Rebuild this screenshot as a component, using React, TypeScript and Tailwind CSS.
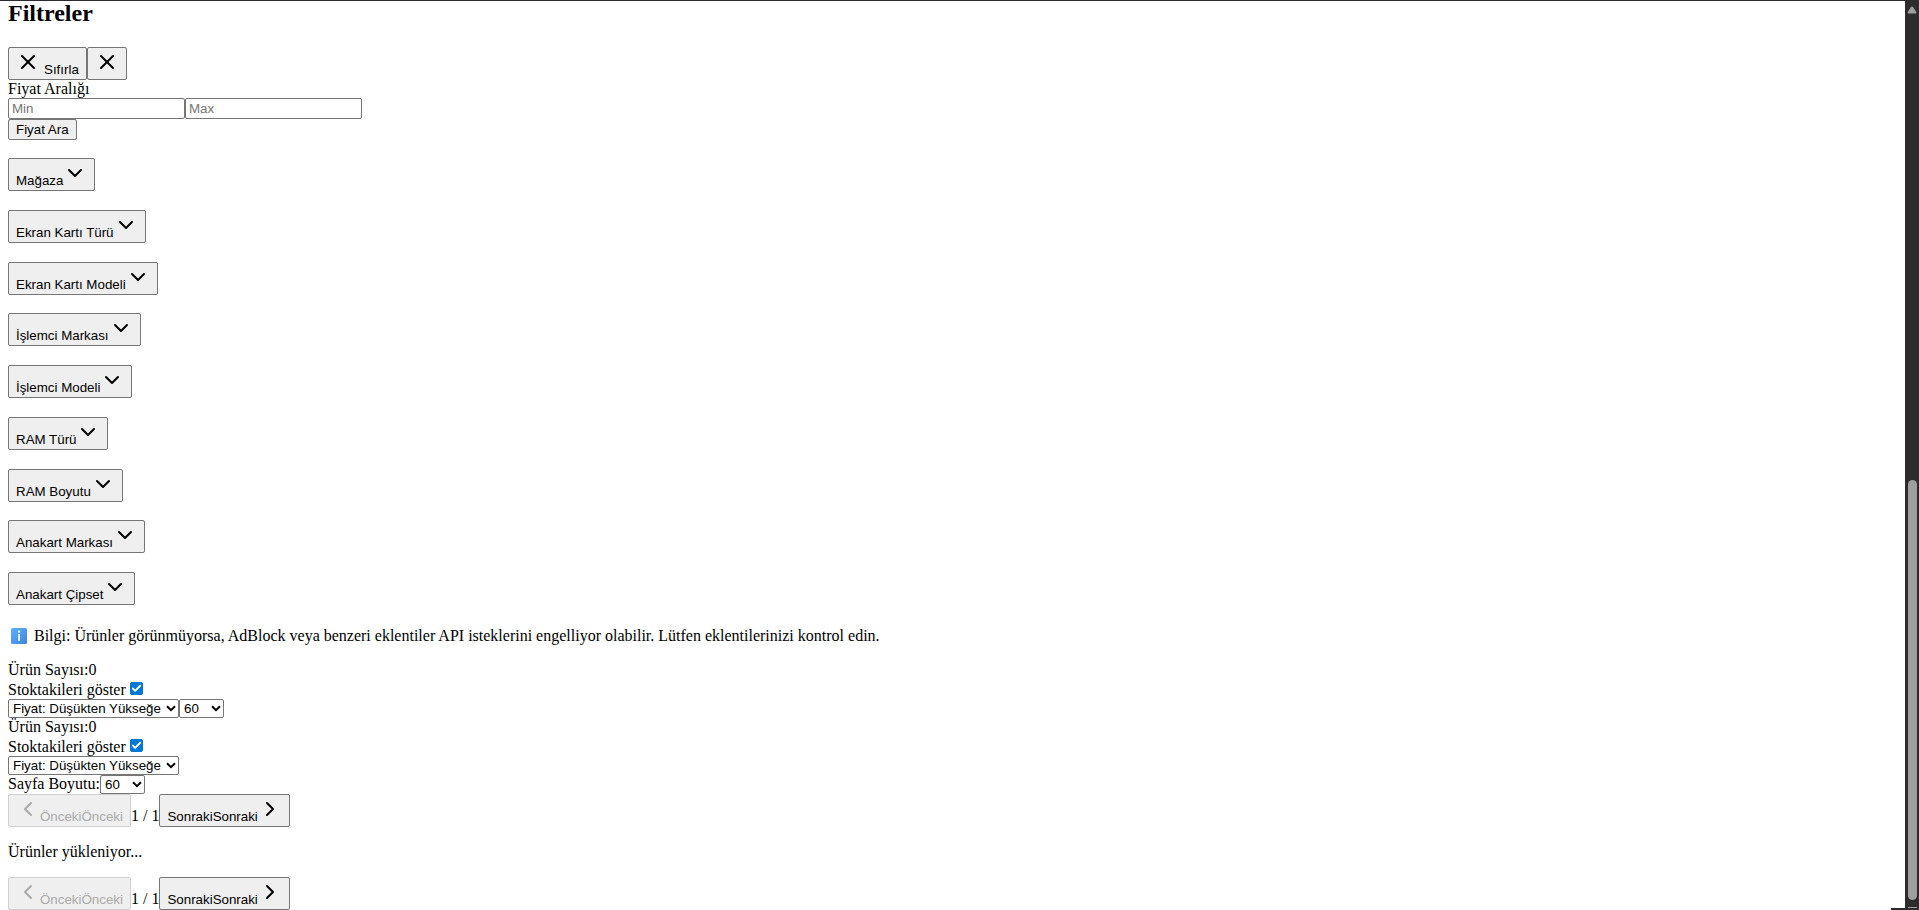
import React from "react";
import { Check, ChevronDown, ChevronLeft, ChevronRight, X } from "lucide-react";

const control =
  "[font-size:smaller] font-['Liberation_Sans',Arial,sans-serif] rounded-[2px] border border-[#767676]";
const iconButton =
  "inline-flex h-[33px] items-baseline bg-[#efefef] px-[7px] pt-[2px] leading-4 disabled:border-[#d0d0d0] disabled:text-[#aaaaaa]";

const filters = [
  "Mağaza",
  "Ekran Kartı Türü",
  "Ekran Kartı Modeli",
  "İşlemci Markası",
  "İşlemci Modeli",
  "RAM Türü",
  "RAM Boyutu",
  "Anakart Markası",
  "Anakart Çipset",
];

function Stock({ id }: { id: string }) {
  return (
    <div>
      <p>Ürün Sayısı:0</p>
      <div className="flex h-5 items-end">
        <label htmlFor={id}>Stoktakileri göster</label>
        <span className="relative mb-1 ml-1 grid size-[13px]">
          <input
            id={id}
            type="checkbox"
            defaultChecked
            className="peer size-[13px] appearance-none rounded-[2px] border border-[#767676] bg-white checked:border-[#0078d7] checked:bg-[#0078d7]"
          />
          <Check
            aria-hidden="true"
            strokeWidth={4}
            className="pointer-events-none absolute inset-px size-[11px] text-white opacity-0 peer-checked:opacity-100"
          />
        </span>
      </div>
    </div>
  );
}

function Select({ label, id, options, width }: { label?: string; id: string; options: string[]; width: string }) {
  return (
    <span className={`relative inline-flex ${width}`}>
      <select
        id={id}
        aria-label={label}
        className={`${control} h-[19px] w-full appearance-none bg-white pr-4 pl-1 leading-4`}
      >
        {options.map((option) => (
          <option key={option}>{option}</option>
        ))}
      </select>
      <svg
        aria-hidden="true"
        viewBox="0 0 10 7"
        className="pointer-events-none absolute top-[6px] right-[3px] h-[7px] w-[10px] fill-none stroke-black stroke-2"
      >
        <path d="M1 1.2 5 5.2 9 1.2" />
      </svg>
    </span>
  );
}

const orders = ["Fiyat: Düşükten Yükseğe", "Fiyat: Yüksekten Düşüğe"];
const sizes = ["60", "120"];

function Pager() {
  return (
    <nav aria-label="Sayfalar" className="flex items-baseline">
      <button type="button" disabled className={`${control} ${iconButton}`}>
        <ChevronLeft className="size-6" />
        <span>Önceki</span>
        <span>Önceki</span>
      </button>
      <span>1 / 1</span>
      <button type="button" className={`${control} ${iconButton}`}>
        <span>Sonraki</span>
        <span>Sonraki</span>
        <ChevronRight className="size-6" />
      </button>
    </nav>
  );
}

function ScrollTrack() {
  return (
    <div aria-hidden="true" className="relative flex w-[14px] shrink-0 flex-col items-center bg-[#2c2c2c]">
      <svg viewBox="0 0 10 8" className="mt-[6px] h-2 w-[10px] fill-[#9f9f9f]">
        <path d="M5 0.5Q5.6 0.5 6 1L9.3 6Q9.6 7.4 8.6 7.4H1.4Q.4 7.4.7 6L4 1Q4.4.5 5 .5Z" />
      </svg>
      <div className="grow-[466]" />
      <div className="w-[9px] grow-[420] rounded-full bg-[#9f9f9f]" />
      <div className="mt-[7px] h-px w-[9px] bg-[#9f9f9f]" />
      <div className="h-[2px]" />
      <div className="absolute right-full bottom-0 h-[2px] w-[14px] bg-[#2b2a33]" />
    </div>
  );
}

export default function App() {
  return (
    <div className="flex min-h-screen bg-white font-['Liberation_Serif','Times_New_Roman',serif] text-base leading-[18px] text-black">
      <main className="min-w-0 flex-1 border-t border-[#2b2a33] px-2">
        <h2 className="text-2xl leading-6 font-bold">Filtreler</h2>
        <div className="mt-[22px] flex">
          <button type="button" className={`${control} ${iconButton}`}>
            <X className="size-6" />
            <span className="ml-1">Sıfırla</span>
          </button>
          <button type="button" aria-label="Kapat" className={`${control} ${iconButton}`}>
            <X className="size-6" />
          </button>
        </div>
        <p>Fiyat Aralığı</p>
        <div className="flex">
          <input
            aria-label="Min"
            placeholder="Min"
            className={`${control} h-[21px] w-[177px] px-[3px] leading-4 placeholder:text-[#757575]`}
          />
          <input
            aria-label="Max"
            placeholder="Max"
            className={`${control} h-[21px] w-[177px] px-[3px] leading-4 placeholder:text-[#757575]`}
          />
        </div>
        <button type="button" className={`${control} block h-[21px] bg-[#efefef] px-[7px] leading-4`}>
          Fiyat Ara
        </button>

        <div className="mt-[18px] flex h-[447px] flex-col items-start justify-between">
          {filters.map((name) => (
            <h3 key={name} className="flex">
              <button type="button" className={`${control} ${iconButton}`}>
                {name}
                <ChevronDown className="size-6" />
              </button>
            </h3>
          ))}
        </div>

        <p className="mt-4 flex items-center pt-1.5">
          <svg aria-hidden="true" viewBox="0 0 16 16" className="mr-[7px] ml-[3px] size-4">
            <defs>
              <linearGradient id="info" x1="0" y1="0" x2="1" y2="1">
                <stop offset="0" stopColor="#5eb0fa" />
                <stop offset="1" stopColor="#3f83e4" />
              </linearGradient>
            </defs>
            <rect width="16" height="16" rx="1.5" fill="url(#info)" />
            <rect x="7.2" y="5.8" width="1.7" height="7" fill="#fff" />
            <circle cx="8" cy="3.7" r="1.1" fill="#fff" />
          </svg>
          Bilgi: Ürünler görünmüyorsa, AdBlock veya benzeri eklentiler API isteklerini engelliyor olabilir. Lütfen
          eklentilerinizi kontrol edin.
        </p>

        <div className="mt-4">
          <Stock id="stock-compact" />
          <div className="flex">
            <Select id="order-compact" label="Sıralama" options={orders} width="w-[171px]" />
            <Select id="size-compact" label="Sayfa Boyutu" options={sizes} width="w-[45px]" />
          </div>
        </div>
        <Stock id="stock-wide" />
        <div className="flex">
          <Select id="order-wide" label="Sıralama" options={orders} width="w-[171px]" />
        </div>
        <div className="flex">
          <label htmlFor="size-wide">Sayfa Boyutu:</label>
          <Select id="size-wide" options={sizes} width="w-[45px]" />
        </div>
        <Pager />
        <p className="my-4">Ürünler yükleniyor...</p>
        <Pager />
      </main>
      <ScrollTrack />
    </div>
  );
}
